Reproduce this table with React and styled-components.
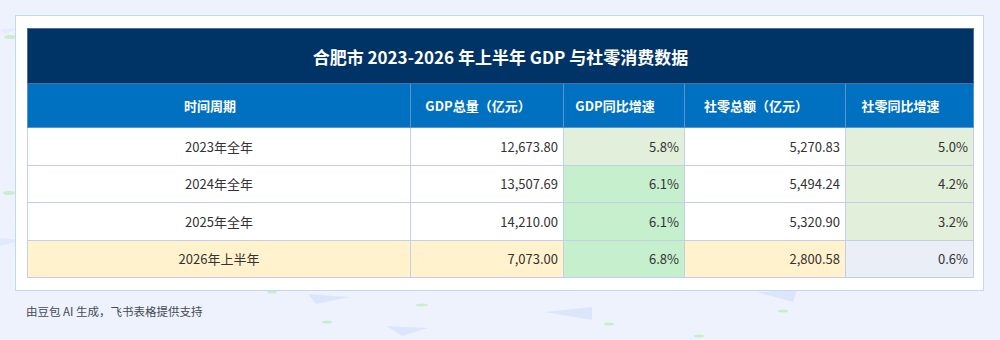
import React from "react";
import styled, { createGlobalStyle } from "styled-components";

const GlobalStyle = createGlobalStyle`
  html, body {
    margin: 0;
    padding: 0;
    background: #eef2fd;
  }
  body {
    font-family: "Noto Sans CJK SC", "Noto Sans", sans-serif;
  }
`;

const Page = styled.div`
  position: relative;
  width: 1000px;
  height: 340px;
  overflow: hidden;
  background: #eef2fd;
`;

const Decor = styled.svg`
  position: absolute;
  left: 0;
  top: 0;
  width: 1000px;
  height: 340px;
  pointer-events: none;
`;

const Content = styled.div`
  position: relative;
  padding: 15px 15px 0 15px;
  display: flex;
  flex-direction: column;
`;

const Card = styled.div`
  width: 945px;
  background: #ffffff;
  border: 1px solid #c4d5f8;
  padding: 12px 11px 12px 11px;
`;

const Table = styled.table`
  width: 946px;
  border-collapse: collapse;
  table-layout: fixed;
  font-size: 13px;
  color: #333333;
  border: 1px solid #aebfdc;
`;

const TitleCell = styled.th`
  height: 54px;
  padding: 0;
  background: #003366;
  color: #ffffff;
  font-size: 17px;
  font-weight: 700;
  text-align: center;
  border: 1px solid #4d6f99;
`;

const HeadCell = styled.th`
  height: 43px;
  padding: 0 18px 0 0;
  background: #0070c0;
  color: #ffffff;
  font-size: 13px;
  font-weight: 700;
  text-align: center;
  border: 1px solid #5c93cc;
`;

const fills = {
  white: "#ffffff",
  sage: "#e2efda",
  green: "#c6efce",
  cream: "#fff2cc",
  mist: "#e9eef7",
};

const Cell = styled.td`
  height: 36.5px;
  padding: 0 ${(p) => (p.$align === "center" ? "0" : "5px")} 0 0;
  background: ${(p) => fills[p.$fill || "white"]};
  text-align: ${(p) => p.$align || "right"};
  border: 1px solid #c3cfe6;
  white-space: nowrap;
`;

const Footer = styled.div`
  margin-top: 12px;
  padding-left: 11px;
  font-size: 11.5px;
  color: #444b57;
`;

const columns = [
  { label: "时间周期", width: 383 },
  { label: "GDP总量（亿元）", width: 153 },
  { label: "GDP同比增速", width: 121 },
  { label: "社零总额（亿元）", width: 161 },
  { label: "社零同比增速", width: 128 },
];

const rows = [
  {
    period: "2023年全年",
    gdp: "12,673.80",
    gdpRate: "5.8%",
    retail: "5,270.83",
    retailRate: "5.0%",
    fills: ["white", "white", "sage", "white", "sage"],
  },
  {
    period: "2024年全年",
    gdp: "13,507.69",
    gdpRate: "6.1%",
    retail: "5,494.24",
    retailRate: "4.2%",
    fills: ["white", "white", "green", "white", "sage"],
  },
  {
    period: "2025年全年",
    gdp: "14,210.00",
    gdpRate: "6.1%",
    retail: "5,320.90",
    retailRate: "3.2%",
    fills: ["white", "white", "green", "white", "sage"],
  },
  {
    period: "2026年上半年",
    gdp: "7,073.00",
    gdpRate: "6.8%",
    retail: "2,800.58",
    retailRate: "0.6%",
    fills: ["cream", "cream", "green", "cream", "mist"],
  },
];

const Background = () => (
  <Decor viewBox="0 0 1000 340">
    <g fill="#dce6fb">
      <path d="M308 294 L350 297 L316 304 Z" />
      <path d="M387 326 L428 328 L402 336 Z" />
      <path d="M545 312 L592 307 L592 320 Z" />
      <path d="M757 292 L797 290 L793 302 Z" />
      <path d="M0 238 L22 240 L0 246 Z" opacity="0.7" />
      <path d="M0 30 L18 28 L6 34 Z" opacity="0.6" />
    </g>
    <g fill="#c9eec9">
      <ellipse cx="272" cy="292" rx="5" ry="1.5" />
      <ellipse cx="327" cy="322" rx="5" ry="1.5" />
      <ellipse cx="422" cy="305" rx="6" ry="1.5" />
      <ellipse cx="609" cy="324" rx="5" ry="1.5" />
      <ellipse cx="783" cy="311" rx="5" ry="1.5" />
      <ellipse cx="699" cy="336" rx="5" ry="1.5" />
      <ellipse cx="9" cy="193" rx="6" ry="2" />
      <ellipse cx="10" cy="37" rx="6" ry="2" />
    </g>
  </Decor>
);

const App = () => {
  return (
    <Page>
      <GlobalStyle />
      <Background />
      <Content>
        <Card>
          <Table>
            <colgroup>
              {columns.map((c) => (
                <col key={c.label} style={{ width: c.width }} />
              ))}
            </colgroup>
            <thead>
              <tr>
                <TitleCell colSpan={5}>
                  合肥市 2023-2026 年上半年 GDP 与社零消费数据
                </TitleCell>
              </tr>
              <tr>
                {columns.map((c) => (
                  <HeadCell key={c.label}>{c.label}</HeadCell>
                ))}
              </tr>
            </thead>
            <tbody>
              {rows.map((r) => (
                <tr key={r.period}>
                  <Cell $align="center" $fill={r.fills[0]}>
                    {r.period}
                  </Cell>
                  <Cell $fill={r.fills[1]}>{r.gdp}</Cell>
                  <Cell $fill={r.fills[2]}>{r.gdpRate}</Cell>
                  <Cell $fill={r.fills[3]}>{r.retail}</Cell>
                  <Cell $fill={r.fills[4]}>{r.retailRate}</Cell>
                </tr>
              ))}
            </tbody>
          </Table>
        </Card>
        <Footer>由豆包 AI 生成，飞书表格提供支持</Footer>
      </Content>
    </Page>
  );
};

export default App;
